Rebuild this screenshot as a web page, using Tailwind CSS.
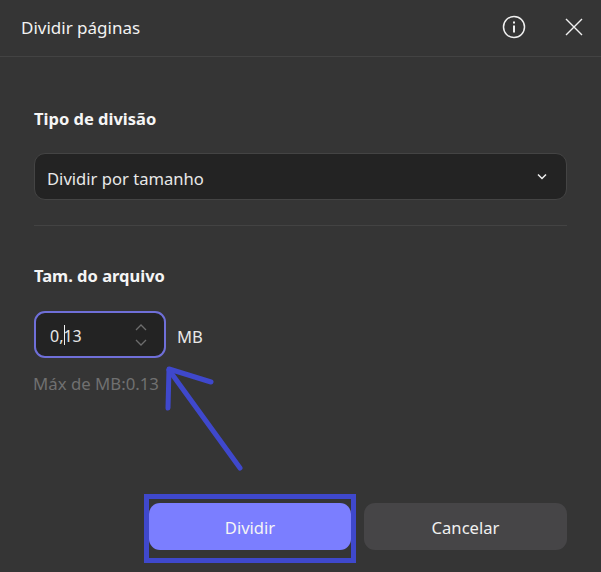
<!DOCTYPE html>
<html lang="pt">

<head>
  <meta charset="UTF-8" />
  <title>Dividir páginas</title>
  <script src="https://cdn.jsdelivr.net/npm/@tailwindcss/browser@4"></script>
</head>

<body class="bg-[#353535] font-['Noto_Sans','Open_Sans',sans-serif] text-white">
  <div class="relative w-[601px] h-[572px] overflow-hidden flex flex-col">
    <!-- header -->
    <div class="h-[57px] shrink-0 border-b border-[#434343] flex items-center pl-[21px] pb-[2px]">
      <h1 class="text-[17px] leading-none text-[#f2f2f2] mr-auto">Dividir páginas</h1>
      <svg class="w-[24px] h-[24px] mr-[39px]" viewBox="0 0 24 24" fill="none" stroke="#f0f0f0" stroke-width="1.5">
        <circle cx="12" cy="12" r="10.5" />
        <path d="M12 10.5v7" stroke-width="2" />
        <path d="M12 6.5v2" stroke-width="2" />
      </svg>
      <svg class="w-[18px] h-[18px] mr-[18px]" viewBox="0 0 18 18" fill="none" stroke="#f0f0f0" stroke-width="1.4">
        <path d="M1 1l16 16M17 1L1 17" />
      </svg>
    </div>

    <!-- body -->
    <div class="px-[34px] flex flex-col">
      <div class="mt-[52px] text-[16.5px] leading-[20px] font-bold text-[#f5f5f5]">Tipo de divisão</div>
      <div class="mt-[24px] h-[47px] rounded-[11px] bg-[#232323] border border-[#444444] flex items-center justify-between pl-[12px] pr-[18px]">
        <span class="text-[16.6px] leading-[24px] pt-[5px] text-[#e8e8e8]">Dividir por tamanho</span>
        <svg class="w-[12px] h-[8px]" viewBox="0 0 12 8" fill="none" stroke="#f0f0f0" stroke-width="1.5">
          <path d="M2 1.5l4 4 4-4" />
        </svg>
      </div>
      <div class="mt-[25px] h-px bg-[#434343]"></div>

      <div class="mt-[40px] text-[16.5px] leading-[20px] font-bold text-[#f5f5f5]">Tam. do arquivo</div>
      <div class="mt-[25px] flex items-center">
        <div class="w-[132px] h-[47px] rounded-[11px] bg-[#232323] border-2 border-[#6f6fd8] flex items-center justify-between pl-[14px] pr-[17px]">
          <span class="relative text-[16px] leading-[24px] pt-[2px] text-[#e8e8e8]">0,13<span class="absolute left-[14px] top-[3px] w-px h-[20px] bg-[#f0f0f0]"></span></span>
          <div class="flex flex-col gap-[8px]">
            <svg class="w-[12px] h-[7px]" viewBox="0 0 12 7" fill="none" stroke="#6d6d6d" stroke-width="1.3"><path d="M1 6l5-5 5 5" /></svg>
            <svg class="w-[12px] h-[7px]" viewBox="0 0 12 7" fill="none" stroke="#6d6d6d" stroke-width="1.3"><path d="M1 1l5 5 5-5" /></svg>
          </div>
        </div>
        <span class="ml-[11px] text-[16.6px] leading-[24px] pt-[4px] text-[#e8e8e8]">MB</span>
      </div>
      <div class="mt-[14px] -ml-px text-[16.8px] leading-[24px] text-[#707070]">Máx de MB:0.13</div>
    </div>

    <!-- footer -->
    <div class="mt-auto mb-[22px] flex justify-end gap-[13px] pr-[34px]">
      <button class="w-[202px] h-[47px] pt-[4px] rounded-[11px] bg-[#7b7eff] text-[16.6px] text-[#f5f5f5]">Dividir</button>
      <button class="w-[203px] h-[47px] pt-[4px] rounded-[11px] bg-[#464547] text-[16.6px] text-[#f0f0f0]">Cancelar</button>
    </div>

    <!-- hand drawn annotations on the screenshot -->
    <div class="absolute left-[144px] top-[494px] w-[212px] h-[69px] border-[5px] border-[#3f48cc]"></div>
    <svg class="absolute left-0 top-0 w-[601px] h-[572px] pointer-events-none" viewBox="0 0 601 572" fill="none" stroke="#3f48cc" stroke-width="5" stroke-linecap="round" stroke-linejoin="round">
      <path d="M240 468L169 370" />
      <path d="M168 408L169 369L211 382" />
    </svg>
  </div>
</body>

</html>
